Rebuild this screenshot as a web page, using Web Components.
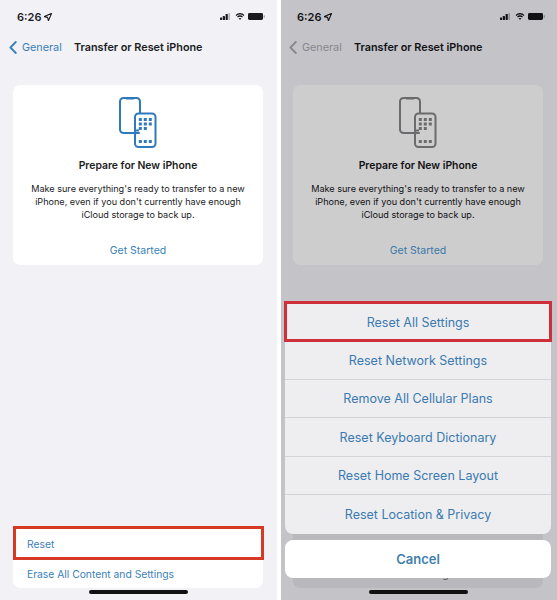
<!DOCTYPE html>
<html>
<head>
<meta charset="utf-8">
<style>
  html, body { margin: 0; padding: 0; background: #fff; }
  body { width: 557px; height: 600px; overflow: hidden; font-family: Inter, "Liberation Sans", sans-serif; }
  #app { display: grid; grid-template-columns: 277px 277px; column-gap: 3px; height: 600px; }
</style>
</head>
<body>
<div id="app">
  <phone-screen>
    <status-bar></status-bar>
    <nav-bar></nav-bar>
    <prepare-card></prepare-card>
    <settings-list highlight></settings-list>
  </phone-screen>
  <phone-screen dim>
    <status-bar></status-bar>
    <nav-bar></nav-bar>
    <prepare-card></prepare-card>
    <settings-list></settings-list>
    <action-sheet slot="overlay">
      <sheet-row highlight>Reset All Settings</sheet-row>
      <sheet-row>Reset Network Settings</sheet-row>
      <sheet-row>Remove All Cellular Plans</sheet-row>
      <sheet-row>Reset Keyboard Dictionary</sheet-row>
      <sheet-row>Reset Home Screen Layout</sheet-row>
      <sheet-row>Reset Location &amp; Privacy</sheet-row>
    </action-sheet>
  </phone-screen>
</div>

<script>
const define = (tag, html) => {
  customElements.define(tag, class extends HTMLElement {
    constructor() {
      super();
      this.attachShadow({ mode: 'open' });
      this.shadowRoot.innerHTML = html;
    }
  });
};

define('phone-screen', `
  <style>
    :host {
      --bg: #f1f1f6;
      --card: #ffffff;
      --ink: #1b1b1d;
      --link: #3a7fb8;
      --back: #3a7fb8;
      --icon: #2f79bd;
      display: flex;
      flex-direction: column;
      position: relative;
      height: 600px;
      overflow: hidden;
      background: var(--bg);
      color: var(--ink);
    }
    :host([dim]) {
      --bg: #c3c3c8;
      --card: #cdcdcd;
      --ink: #111114;
      --link: #3a78a8;
      --back: #88888c;
      --icon: #6b6b6d;
      box-shadow: inset 1px 0 0 #fff;
    }
    .bar {
      position: absolute;
      left: 89px;
      bottom: 6px;
      width: 99px;
      height: 4px;
      border-radius: 2px;
      background: #111;
    }
  </style>
  <slot></slot>
  <slot name="overlay"></slot>
  <div class="bar"></div>
`);

define('status-bar', `
  <style>
    :host {
      display: flex;
      align-items: center;
      justify-content: space-between;
      height: 17px;
      padding: 8px 12px 0 17px;
      font-size: 11px;
      font-weight: 600;
      color: var(--ink);
    }
    .left, .right { display: flex; align-items: center; }
    .left { gap: 3px; }
    .right { gap: 5px; }
    .batt { margin-left: -2px; }
    svg { display: block; fill: currentColor; }
  </style>
  <div class="left">
    <span>6:26</span>
    <svg width="8" height="8" viewBox="0 0 8 8"><path d="M7.600.4 4.400 7.700 3.600 4.400.3 3.600Z" fill="none" stroke="currentColor" stroke-width="1.100" stroke-linejoin="round"/></svg>
  </div>
  <div class="right">
    <svg width="10" height="7" viewBox="0 0 10 7"><rect x="0" y="4.500" width="2.200" height="2.500" rx=".4"/><rect x="2.800" y="3" width="2.200" height="4" rx=".4"/><rect x="5.600" y="1" width="2.200" height="6" rx=".4"/><rect x="8.400" y="0" width="1.600" height="7" rx=".4" opacity=".3"/></svg>
    <svg width="10" height="7" viewBox="0 0 12 8" preserveAspectRatio="none"><path d="M6 1.600c1.700 0 3.200.6 4.300 1.700l1-1.100A7.600 7.600 0 0 0 6 0 7.600 7.600 0 0 0 .7 2.200l1 1.100A6.100 6.100 0 0 1 6 1.600Zm0 2.600c1 0 1.900.4 2.500 1l1-1.100A5.100 5.100 0 0 0 6 2.700c-1.400 0-2.600.5-3.500 1.400l1 1.100c.6-.6 1.500-1 2.500-1Zm0 1.400c-.6 0-1.100.2-1.500.6L6 8l1.500-1.800c-.4-.4-.9-.6-1.500-.6Z"/></svg>
    <svg class="batt" width="17" height="7" viewBox="0 0 17 7"><rect x="0" y="0" width="15" height="7" rx="1.400"/><rect x="15.600" y="2.200" width="1.200" height="2.600" rx=".5" opacity=".4"/></svg>
  </div>
`);

define('nav-bar', `
  <style>
    :host {
      display: flex;
      align-items: center;
      height: 20px;
      margin-top: 12px;
      padding-left: 9px;
      font-size: 10.800px;
    }
    svg { display: block; margin-right: 5px; }
    .back { color: var(--back); width: 52px; }
    .title { font-weight: 600; color: var(--ink); }
  </style>
  <svg width="8" height="13" viewBox="0 0 8 13" fill="none"><path d="M6.800 1 1.400 6.500l5.400 5.500" stroke="var(--back)" stroke-width="1.800" stroke-linecap="round" stroke-linejoin="round"/></svg>
  <span class="back">General</span>
  <span class="title">Transfer or Reset iPhone</span>
`);

define('prepare-card', `
  <style>
    :host {
      display: flex;
      flex-direction: column;
      align-items: center;
      margin: 28px 14px 0 13px;
      height: 180px;
      box-sizing: border-box;
      padding-top: 12px;
      border-radius: 7px;
      background: var(--card);
      text-align: center;
    }
    svg { display: block; }
    h2 { margin: 9px 0 0; font-size: 10.400px; line-height: 16px; font-weight: 600; color: var(--ink); }
    p { margin: 8px 0 0; width: 222px; font-size: 9.100px; line-height: 13px; color: var(--ink); }
    a { margin-top: 23px; font-size: 10.500px; line-height: 14px; color: var(--link); }
  </style>
  <svg width="38" height="52" viewBox="0 0 38 52" fill="none" stroke="var(--icon)" stroke-width="2">
    <path d="M20 36H4.500A3.500 3.500 0 0 1 1 32.500V4.500A3.500 3.500 0 0 1 4.500 1h13A3.500 3.500 0 0 1 21 4.500V16" stroke-linecap="round"/>
    <path d="M7 1.500h8M15 33.500h5" stroke-width="1.800"/>
    <rect x="16" y="16.500" width="20.500" height="33.500" rx="3.500"/>
    <g fill="var(--icon)" stroke="none">
      <rect x="19.800" y="21" width="3" height="3"/><rect x="24.800" y="21" width="3" height="3"/><rect x="29.800" y="21" width="3" height="3"/>
      <rect x="19.800" y="25.500" width="3" height="3"/><rect x="24.800" y="25.500" width="3" height="3"/><rect x="29.800" y="25.500" width="3" height="3"/>
      <rect x="19.800" y="30" width="3" height="3"/><rect x="24.800" y="30" width="3" height="3"/>
      <rect x="19.800" y="43" width="3" height="3"/><rect x="24.800" y="43" width="3" height="3"/><rect x="29.800" y="43" width="3" height="3"/>
    </g>
  </svg>
  <h2>Prepare for New iPhone</h2>
  <p>Make sure everything's ready to transfer to a new iPhone, even if you don't currently have enough iCloud storage to back up.</p>
  <a>Get Started</a>
`);

customElements.define('settings-list', class extends HTMLElement {
  constructor() {
    super();
    this.attachShadow({ mode: 'open' });
    this.shadowRoot.innerHTML = `
      <style>
        :host {
          display: block;
          margin: auto 14px 12px 13px;
          border-radius: 7px;
          background: var(--card);
          font-size: 10.300px;
          color: var(--link);
        }
        .row { display: flex; align-items: center; padding-left: 14px; }
        .row.reset { height: 32px; box-sizing: border-box; padding-top: 2px; }
        .row.erase { height: 29px; }
        :host([highlight]) .row.reset {
          outline: 3px solid #d63a24;
          outline-offset: -2px;
          margin-left: 1px;
          padding-left: 13px;
        }
        :host(:not([highlight])) { background: #b9b9bd; color: #55555a; }
        :host(:not([highlight])) .row.reset { visibility: hidden; }
      </style>
      <div class="row reset">Reset</div>
      <div class="row erase">Erase All Content and Settings</div>
    `;
  }
});

define('action-sheet', `
  <style>
    :host {
      position: absolute;
      left: 5px;
      right: 6px;
      top: 302px;
      display: flex;
      flex-direction: column;
      gap: 6px;
    }
    .group {
      display: flex;
      flex-direction: column;
      border-radius: 8px;
      background: #eeeef0;
    }
    .cancel {
      display: flex;
      align-items: center;
      justify-content: center;
      height: 38px;
      border-radius: 8px;
      background: #fff;
      font-size: 13px;
      font-weight: 600;
      color: #3f7fae;
    }
  </style>
  <div class="group"><slot></slot></div>
  <div class="cancel">Cancel</div>
`);

define('sheet-row', `
  <style>
    :host {
      display: flex;
      align-items: center;
      justify-content: center;
      height: 38.500px;
      box-sizing: border-box;
      padding-top: 1px;
      font-size: 12.500px;
      color: #3a7ab0;
      border-bottom: 1px solid #d4d4d8;
    }
    :host(:last-child) { border-bottom: 0; }
    :host([highlight]) {
      height: 39px;
      border-bottom: 0;
      outline: 3px solid #cf2f3a;
      outline-offset: -2px;
    }
  </style>
  <slot></slot>
`);
</script>
</body>
</html>
